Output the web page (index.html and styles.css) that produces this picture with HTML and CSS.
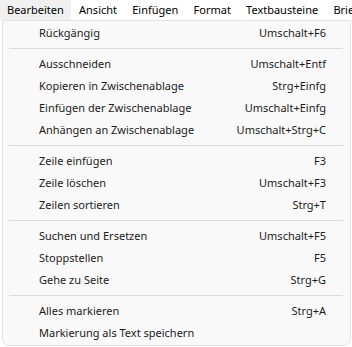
FILE: index.html
```html
<!DOCTYPE html>
<html lang="de">
<head>
<meta charset="utf-8">
<link rel="stylesheet" href="styles.css">
</head>
<body>
<div class="menubar">
  <div class="mb-item active">Bearbeiten</div>
  <div class="mb-item">Ansicht</div>
  <div class="mb-item">Einfügen</div>
  <div class="mb-item">Format</div>
  <div class="mb-item">Textbausteine</div>
  <div class="mb-item">Brief</div>
</div>
<div class="menu">
  <div class="row"><span class="label">Rückgängig</span><span class="key">Umschalt+F6</span></div>
  <div class="sep"></div>
  <div class="row"><span class="label">Ausschneiden</span><span class="key">Umschalt+Entf</span></div>
  <div class="row"><span class="label">Kopieren in Zwischenablage</span><span class="key">Strg+Einfg</span></div>
  <div class="row"><span class="label">Einfügen der Zwischenablage</span><span class="key">Umschalt+Einfg</span></div>
  <div class="row"><span class="label">Anhängen an Zwischenablage</span><span class="key">Umschalt+Strg+C</span></div>
  <div class="sep"></div>
  <div class="row"><span class="label">Zeile einfügen</span><span class="key">F3</span></div>
  <div class="row"><span class="label">Zeile löschen</span><span class="key">Umschalt+F3</span></div>
  <div class="row"><span class="label">Zeilen sortieren</span><span class="key">Strg+T</span></div>
  <div class="sep"></div>
  <div class="row"><span class="label">Suchen und Ersetzen</span><span class="key">Umschalt+F5</span></div>
  <div class="row"><span class="label">Stoppstellen</span><span class="key">F5</span></div>
  <div class="row"><span class="label">Gehe zu Seite</span><span class="key">Strg+G</span></div>
  <div class="sep"></div>
  <div class="row"><span class="label">Alles markieren</span><span class="key">Strg+A</span></div>
  <div class="row"><span class="label">Markierung als Text speichern</span><span class="key"></span></div>
</div>
</body>
</html>
```
FILE: styles.css
```css
html, body {
  margin: 0;
  padding: 0;
  background: #ffffff;
}
body {
  width: 352px;
  height: 347px;
  overflow: hidden;
  font-family: "Noto Sans", "Open Sans", sans-serif;
  font-size: 11px;
  color: #1b1b1b;
}
.menubar {
  display: flex;
  height: 20px;
  white-space: nowrap;
  overflow: hidden;
}
.mb-item {
  padding: 0 7.6px;
  line-height: 20px;
  color: #000;
  flex: none;
}
.mb-item.active {
  padding: 0 7px;
  margin-right: 0.6px;
  background: #f0f0f0;
}
.menu {
  margin: 0 1px 0 2px;
  height: 326px;
  box-sizing: border-box;
  background: #f9f9f9;
  border: 1px solid #e3e3e3;
  border-radius: 0 0 7px 7px;
  padding: 1px 0 2px;
}
.row {
  display: flex;
  justify-content: space-between;
  height: 22px;
  line-height: 22px;
  padding: 0 24px 0 36px;
}
.sep {
  height: 1px;
  background: #dcdcdc;
  margin: 4px 7px 4px 6px;
}
```
